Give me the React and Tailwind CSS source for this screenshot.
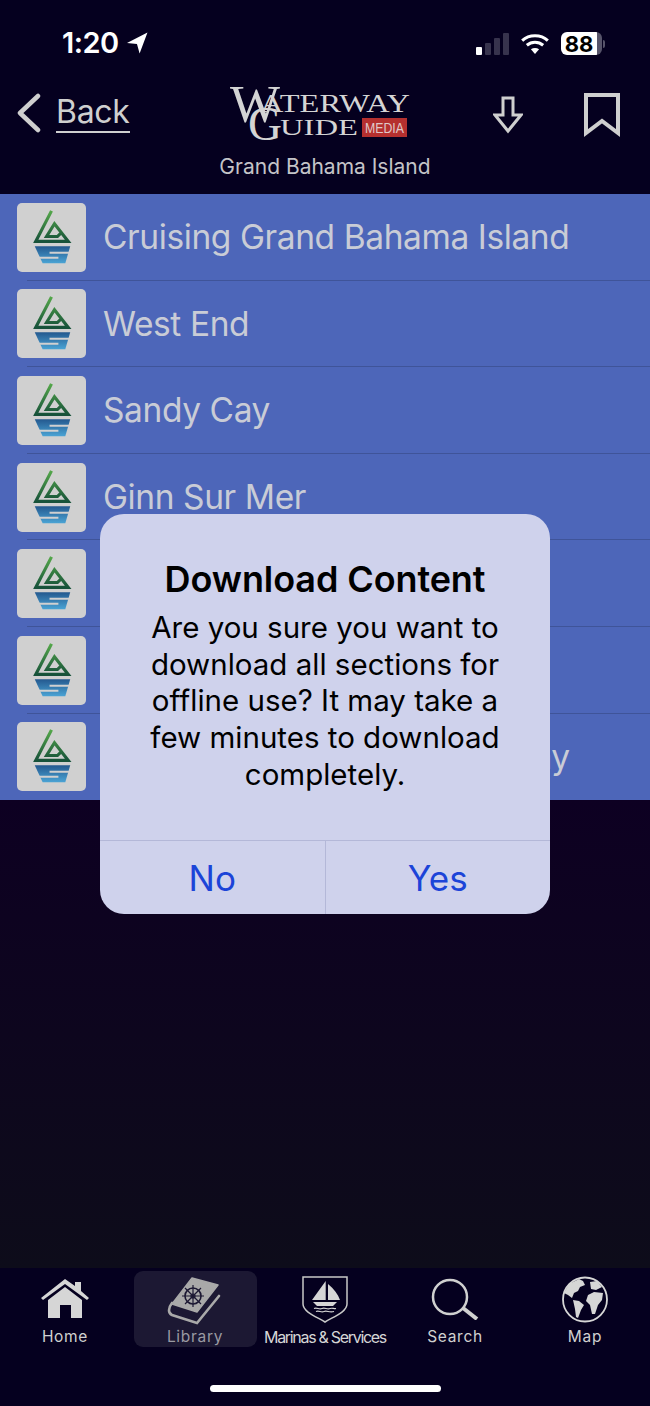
import React from 'react';

const sections = [
  'Cruising Grand Bahama Island',
  'West End',
  'Sandy Cay',
  'Ginn Sur Mer',
  'Freeport',
  'Port Lucaya',
  'Xanadu by Lucayan Waterway',
];

const SailLogo = () => (
  <svg viewBox="0 0 70 70" className="w-[69px] h-[69px]">
    <defs>
      <linearGradient id="green" x1="0" y1="0" x2="0" y2="1">
        <stop offset="0" stopColor="#55a84a" />
        <stop offset="1" stopColor="#17523a" />
      </linearGradient>
      <linearGradient id="blue" x1="0" y1="0" x2="0" y2="1">
        <stop offset="0" stopColor="#24598f" />
        <stop offset="1" stopColor="#4aa3d4" />
      </linearGradient>
    </defs>
    <path d="M35 8 L19 39 H52 L38 21 L30 34 H41 L45 30" fill="none" stroke="url(#green)" strokeWidth="3.2" />
    <path d="M18 44 H54 L49 61 H26 Z" fill="url(#blue)" />
    <path d="M33 50.5 H54 M19 55.5 H42" fill="none" stroke="#d0d0d0" strokeWidth="2" />
  </svg>
);

const HomeIcon = () => (
  <svg viewBox="0 0 50 42" className="w-[50px] h-[42px]" fill="#d6d6d6">
    <path d="M25 1 L35 8 V4 H41 V13 L49 20 L47 22 L25 6 L3 22 L1 20 Z" />
    <path d="M8 22 L25 9 L42 22 V40 H31 V27 H20 V40 H8 Z" />
  </svg>
);

const BookIcon = () => (
  <svg viewBox="0 0 70 55" className="w-[70px] h-[55px]">
    <path d="M32 6 L58 13 L37 40 L12 32 Z" fill="#a9a9a9" stroke="#a9a9a9" strokeWidth="1.5" strokeLinejoin="round" />
    <path d="M12 31 C8 36 8 41 12 43 L37 51 L59 24" fill="none" stroke="#a9a9a9" strokeWidth="2.6" strokeLinecap="round" />
    <g fill="none" stroke="#1c1833" strokeWidth="1.2">
      <circle cx="33" cy="24" r="8" strokeWidth="1.6" />
      <circle cx="33" cy="24" r="2" />
      <path d="M33 13 V35 M22 24 H44 M25 16 L41 32 M41 16 L25 32" />
    </g>
  </svg>
);

const MarinaIcon = () => (
  <svg viewBox="0 0 60 55" className="w-[60px] h-[55px]">
    <path d="M8 5 H52 V32 C52 40 38 45 30 50 C22 45 8 40 8 32 Z" fill="none" stroke="#c8c8c8" strokeWidth="1.5" />
    <path d="M30.7 9 V28 H17 Z M33 12 C39 17 43 22 45 28 H33 Z" fill="#d6d6d6" />
    <path d="M18 30 H42 L38 34 H22 Z" fill="#d6d6d6" />
    <path d="M19 36.5 C22 35 24 38 27 36.5 C30 35 32 38 35 36.5 C37 35.5 39 37 41 36.5 M21 39.5 C24 38 26 41 29 39.5 C32 38 34 41 39 39.5" fill="none" stroke="#d6d6d6" strokeWidth="1.1" />
  </svg>
);

const SearchIcon = () => (
  <svg viewBox="0 0 50 42" className="w-[50px] h-[42px]" fill="none" stroke="#d0d0d0">
    <circle cx="20" cy="19" r="17" strokeWidth="2.5" />
    <path d="M33 30 L47 41" strokeWidth="4" />
  </svg>
);

const GlobeIcon = () => (
  <svg viewBox="0 0 60 55" className="w-[60px] h-[55px]">
    <circle cx="30" cy="27.5" r="22" fill="none" stroke="#d6d6d6" strokeWidth="1.8" />
    <g fill="#d6d6d6">
      <path d="M9 21 L14 12 L24 7 L28 9 L30 13 L25 15 L23 19 L19 21 L17 26 L13 23 Z" />
      <path d="M18 28 L24 29 L29 33 L26 38 L23 46 L21 45 L20 37 Z" />
      <path d="M33 23 L39 20 L48 21 L47 28 L43 33 L40 42 L37 42 L35 33 L31 29 Z" />
      <path d="M35 10 L42 9 L47 15 L41 18 L36 17 Z" />
    </g>
  </svg>
);

const tabs = [
  { label: 'Home', icon: <HomeIcon /> },
  { label: 'Library', icon: <BookIcon />, active: true },
  { label: 'Marinas & Services', icon: <MarinaIcon />, tight: true },
  { label: 'Search', icon: <SearchIcon /> },
  { label: 'Map', icon: <GlobeIcon /> },
];

const App = () => {
  return (
    <div className="relative w-[650px] h-[1406px] overflow-hidden flex flex-col bg-[#05001f] font-['Inter','Liberation_Sans',sans-serif]">
      {/* status bar */}
      <div className="h-[60px] shrink-0 flex items-start justify-between pt-[26px] pl-[62px] pr-[45px] text-white">
        <div className="flex items-center gap-[8px]">
          <span className="text-[29px] leading-[34px] font-semibold tracking-[-0.5px]">1:20</span>
          <svg viewBox="0 0 20 20" className="w-[21px] h-[22px]" fill="#fff">
            <path d="M19.5 0 L12 20 L9.5 11 L0 10 Z" />
          </svg>
        </div>
        <div className="flex items-center gap-[12px] pt-[6px]">
          <div className="flex items-end gap-[3px] h-[22px]">
            <div className="w-[6px] h-[8px] rounded-[1px] bg-white" />
            <div className="w-[6px] h-[12px] rounded-[1px] bg-[#37334d]" />
            <div className="w-[6px] h-[17px] rounded-[1px] bg-[#37334d]" />
            <div className="w-[6px] h-[22px] rounded-[1px] bg-[#37334d]" />
          </div>
          <svg viewBox="0 0 24 18" className="w-[28px] h-[21px]" fill="none" stroke="#fff" strokeWidth="2.6">
            <path d="M1 6.5 C7 1 17 1 23 6.5" />
            <path d="M5 10.5 C9 7 15 7 19 10.5" />
            <path d="M12 18 L8.5 14 C10.5 12.6 13.5 12.6 15.5 14 Z" fill="#fff" stroke="none" />
          </svg>
          <div className="flex items-center gap-[1px]">
            <div className="w-[41px] h-[23px] rounded-[6px] flex items-center justify-center pr-[5px] bg-[linear-gradient(90deg,#fff_88%,#57546a_88%)] text-black text-[22px] leading-none font-bold">
              88
            </div>
            <div className="w-[2px] h-[8px] rounded-r-full bg-[#57546a]" />
          </div>
        </div>
      </div>

      {/* header */}
      <div className="h-[134px] shrink-0 flex justify-between pl-[16px] pr-[30px] text-[#cfcfcf]">
        <div className="flex items-start gap-[15px] pt-[33px] w-[204px]">
          <svg viewBox="0 0 25 40" className="w-[25px] h-[40px]" fill="none" stroke="#cfcfcf" strokeWidth="4.5" strokeLinecap="round" strokeLinejoin="round">
            <path d="M22 3 L4 20 L22 37" />
          </svg>
          <span className="text-[32px] leading-[38px] tracking-[-0.3px] border-b-[2px] border-[#cfcfcf]">Back</span>
        </div>
        <div className="flex flex-col items-center pt-[24px]">
          <svg viewBox="0 0 192 60" className="w-[192px] h-[60px] overflow-visible" fill="#d4d4d4">
            <text x="1" y="38" fontFamily="'Liberation Serif', serif" fontSize="53" textLength="50" lengthAdjust="spacingAndGlyphs">W</text>
            <text x="31" y="28" fontFamily="'Liberation Serif', serif" fontSize="26" textLength="150" lengthAdjust="spacingAndGlyphs">ATERWAY</text>
            <text x="19" y="56" fontFamily="'Liberation Serif', serif" fontSize="48" textLength="34" lengthAdjust="spacingAndGlyphs">G</text>
            <text x="51" y="51" fontFamily="'Liberation Serif', serif" fontSize="23" textLength="78" lengthAdjust="spacingAndGlyphs">UIDE</text>
            <rect x="133" y="34" width="45" height="19" fill="#b5302f" />
            <text x="136" y="49" fontFamily="'Liberation Sans', sans-serif" fontSize="14" textLength="39" lengthAdjust="spacingAndGlyphs" fill="#e0c8c8">MEDIA</text>
          </svg>
          <span className="mt-[11px] text-[21px] leading-[24px] whitespace-nowrap text-[#c4c4c8]">Grand Bahama Island</span>
        </div>
        <div className="flex items-start justify-end gap-[61px] pt-[33px] w-[190px]">
          <svg viewBox="0 0 30 38" className="w-[30px] h-[38px] mt-[3px]" fill="none" stroke="#cfcfcf" strokeWidth="3">
            <path d="M10 2 H20 V19 H28 L15 35 L2 19 H10 Z" />
          </svg>
          <svg viewBox="0 0 36 44" className="w-[36px] h-[44px]" fill="none" stroke="#cfcfcf" strokeWidth="4">
            <path d="M2 2 H34 V40 L18 28 L2 40 Z" />
          </svg>
        </div>
      </div>

      {/* section list */}
      <div className="shrink-0 bg-[#4d66b9]">
        {sections.map((title, i) => (
          <div key={title} className="h-[86.6px] flex items-center pl-[17px] relative">
            <div className="w-[69px] h-[69px] rounded-[5px] bg-[#d0d0d0] shrink-0">
              <SailLogo />
            </div>
            <span className="ml-[17px] text-[33.5px] leading-[40px] tracking-[-0.4px] text-[#c9ccd6] whitespace-nowrap">{title}</span>
            {i < sections.length - 1 && <div className="absolute left-[27px] right-0 bottom-0 h-[1px] bg-[#3f5499]" />}
          </div>
        ))}
      </div>

      <div className="flex-1 bg-[linear-gradient(180deg,#0d0022_0%,#0d0c1a_100%)]" />

      {/* tab bar */}
      <div className="h-[138px] shrink-0 bg-[#05001f] pt-[3px]">
        <div className="grid grid-cols-5 h-[75px]">
          {tabs.map((tab) => (
            <div key={tab.label} className="relative flex flex-col items-center">
              {tab.active && <div className="absolute top-0 bottom-0 w-[123px] rounded-[9px] bg-[#1c1833]" />}
              <div className="relative h-[56px] flex items-center justify-center">{tab.icon}</div>
              <span
                className={
                  tab.tight
                    ? 'relative whitespace-nowrap text-[16px] leading-[20px] tracking-[-1.3px] text-[#d6d6d6]'
                    : tab.active
                      ? 'relative text-[15.5px] leading-[20px] tracking-[0.7px] text-[#9a9aa2]'
                      : 'relative text-[15.5px] leading-[20px] tracking-[0.7px] text-[#d0d0d0]'
                }
              >
                {tab.label}
              </span>
            </div>
          ))}
        </div>
        <div className="mt-[39px] mx-auto w-[231px] h-[7px] rounded-full bg-white" />
      </div>

      {/* alert */}
      <div className="absolute left-[100px] top-[514px] w-[450px] h-[400px] rounded-[24px] bg-[#cfd2ec] flex flex-col">
        <div className="flex-1 flex flex-col items-center pt-[44px] text-black text-center">
          <h2 className="text-[36px] leading-[42px] font-semibold tracking-[-0.1px]">Download Content</h2>
          <p className="w-[400px] text-[29.5px] leading-[36.7px] mt-[9px]">
            Are you sure you want to download all sections for offline use? It may take a few minutes to download completely.
          </p>
        </div>
        <div className="h-[74px] flex border-t border-[#b4b8d8] text-[#1c44d8] text-[35px]">
          <div className="flex-1 flex items-center justify-center pt-[1px] border-r border-[#b4b8d8]">No</div>
          <div className="flex-1 flex items-center justify-center pt-[1px]">Yes</div>
        </div>
      </div>
    </div>
  );
};

export default App;
